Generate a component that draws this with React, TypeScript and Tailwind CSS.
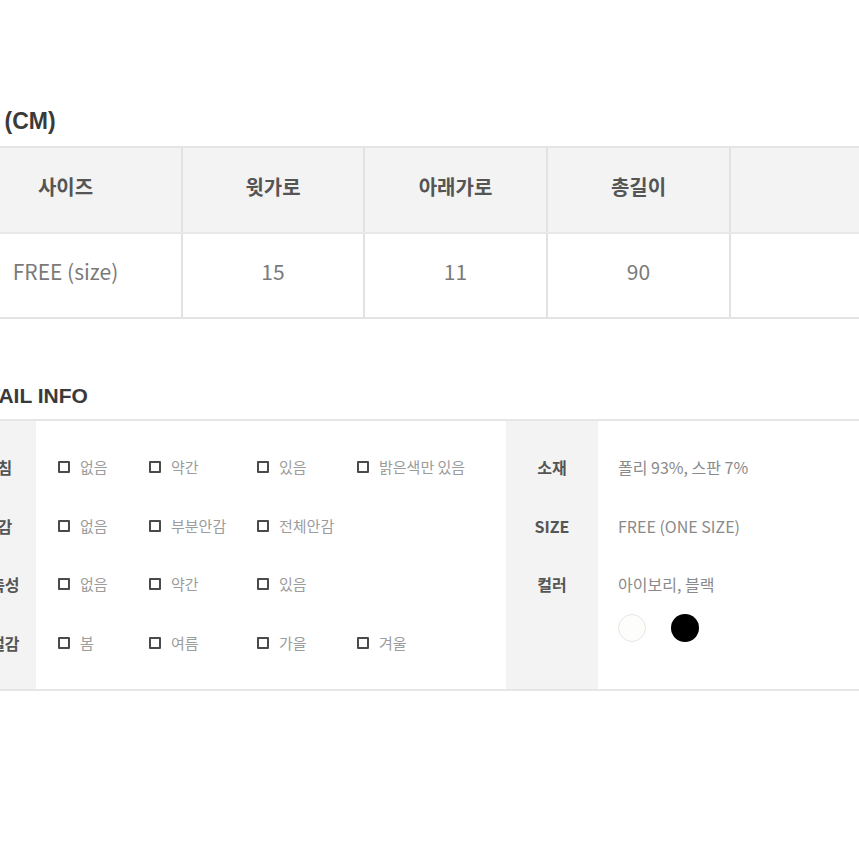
import React from "react";

const KR = { fontFamily: '"Noto Sans CJK KR", "Noto Sans", sans-serif' };
const TITLE = { fontFamily: '"Liberation Sans", "Noto Sans CJK KR", sans-serif' };

const sizeHeaders = ["사이즈", "윗가로", "아래가로", "총길이", ""];
const sizeValues = ["FREE (size)", "15", "11", "90", ""];
const colW = ["w-[233px]", "w-[182px]", "w-[183px]", "w-[183px]", "w-[182px]"];

const detailRows: { label: string; items: string[] }[] = [
  { label: "비침", items: ["없음", "약간", "있음", "밝은색만 있음"] },
  { label: "안감", items: ["없음", "부분안감", "전체안감"] },
  { label: "신축성", items: ["없음", "약간", "있음"] },
  { label: "계절감", items: ["봄", "여름", "가을", "겨울"] },
];

const infoRows = [
  { label: "소재", value: "폴리 93%, 스판 7%" },
  { label: "SIZE", value: "FREE (ONE SIZE)" },
  { label: "컬러", value: "아이보리, 블랙" },
];

function Check({ text }: { text: string }) {
  return (
    <div className="flex items-center gap-[10px]">
      <span className="w-[12px] h-[12px] border-2 border-[#4a4a4a] rounded-[1px] shrink-0" />
      <span className="text-[15px] text-[#9c9c9c] whitespace-nowrap">{text}</span>
    </div>
  );
}

export default function App() {
  return (
    <div className="w-[859px] h-[859px] overflow-hidden bg-white" style={KR}>
      <div className="-ml-[50px] w-[1000px] pt-[106px]">
        <h2 className="-ml-[3px] text-[23px] leading-[30px] font-bold text-[#3a3a3a]" style={TITLE}>
          SIZE (CM)
        </h2>
        <div className="mt-[10px] border-t-2 border-b-2 border-[#e4e4e4]">
          <div className="flex bg-[#f3f3f3] border-b-2 border-[#e8e8e8]">
            {sizeHeaders.map((h, i) => (
              <div
                key={i}
                className={`${colW[i]} h-[84px] pb-[6px] flex items-center justify-center text-[20px] font-bold text-[#555] ${
                  i < 4 ? "border-r-2 border-[#e2e2e2]" : ""
                }`}
              >
                {h}
              </div>
            ))}
          </div>
          <div className="flex">
            {sizeValues.map((v, i) => (
              <div
                key={i}
                className={`${colW[i]} h-[83px] pb-[8px] flex items-center justify-center text-[21px] text-[#7a7a7a] ${
                  i < 4 ? "border-r-2 border-[#e2e2e2]" : ""
                }`}
              >
                {v}
              </div>
            ))}
          </div>
        </div>

        <h2 className="mt-[63px] ml-[8px] text-[21px] leading-[28px] font-bold text-[#3a3a3a]" style={TITLE}>
          DETAIL INFO
        </h2>
        <div className="mt-[9px] flex border-t-2 border-b-2 border-[#e6e6e6]">
          <div className="w-[86px] bg-[#f3f3f3] pl-[9px] py-[17px] flex flex-col">
            {detailRows.map((r) => (
              <div key={r.label} className="h-[58.5px] flex items-center justify-center text-[16px] font-bold text-[#555]">
                {r.label}
              </div>
            ))}
          </div>
          <div className="w-[470px] bg-white pl-[22px] py-[17px] flex flex-col">
            {detailRows.map((r) => (
              <div key={r.label} className="h-[58.5px] grid grid-cols-[91px_108px_100px_auto] items-center">
                {r.items.map((t) => (
                  <Check key={t} text={t} />
                ))}
              </div>
            ))}
          </div>
          <div className="w-[92px] bg-[#f3f3f3] py-[17px] flex flex-col">
            {infoRows.map((r) => (
              <div key={r.label} className="h-[58.5px] flex items-center justify-center text-[16px] font-bold text-[#555]">
                {r.label}
              </div>
            ))}
          </div>
          <div className="flex-1 bg-white pl-[20px] py-[17px] flex flex-col">
            {infoRows.map((r) => (
              <div key={r.label} className="h-[58.5px] flex items-center text-[16px] text-[#8a8a8a]">
                {r.value}
              </div>
            ))}
            <div className="mt-[0px] flex gap-[25px]">
              <span className="w-[28px] h-[28px] rounded-full bg-[#fdfdfb] border border-[#e6e6e2]" />
              <span className="w-[28px] h-[28px] rounded-full bg-black" />
            </div>
          </div>
        </div>
      </div>
    </div>
  );
}
